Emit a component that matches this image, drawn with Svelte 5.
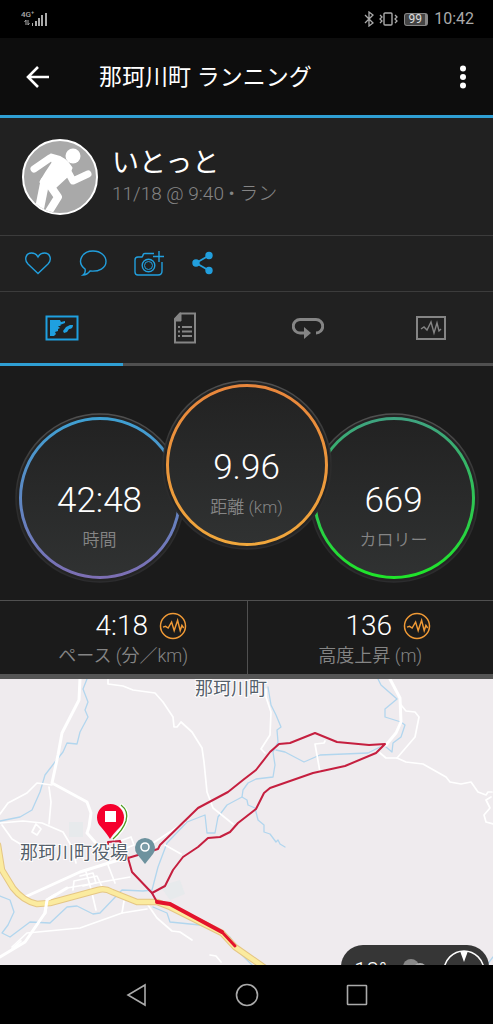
<script lang="ts">
  let activeTab = 'map';
  let liked = false;

  const tabs = [
    { id: 'map', label: '地図' },
    { id: 'details', label: '詳細' },
    { id: 'laps', label: 'ラップ' },
    { id: 'charts', label: 'グラフ' }
  ];

  const gauges = [
    { id: 'time', value: '42:48', label: '時間', from: '#3fa0d2', to: '#7d6fb4' },
    { id: 'distance', value: '9.96', label: '距離 (km)', from: '#e8863c', to: '#f0a73c' },
    { id: 'calories', value: '669', label: 'カロリー', from: '#3fa380', to: '#1fe52a' }
  ];

  const stats = [
    { value: '4:18', label: 'ペース (分／km)' },
    { value: '136', label: '高度上昇 (m)' }
  ];

  const rivers = [
    '87,0 83,10 88,23 85,31 88,38 80,53 77,65 67,64 63,73 55,83 45,96 40,113 32,131 20,138 0,142',
    '268,8 271,26 276,36 281,48 277,51 278,63 273,73 275,86 273,98 256,100 248,104 243,111 242,118 227,126 218,138 215,154 207,154 205,136 187,143 167,164 158,188 152,211 143,212 122,211 100,234 93,235 77,227 67,228 50,244 30,243 10,258 2,254 8,246 14,233 10,221 0,217',
    '276,71 285,73 304,83 320,76 368,74 380,68',
    '378,0 381,6 397,20 385,30 385,38 401,43 405,46 401,58 393,64 392,73 386,68',
    '242,118 247,121 248,126 255,129 258,141 264,146 264,153 270,155 276,163 278,161 280,165 285,168',
    '153,228 167,234 170,243 200,246 230,258 240,274 252,286',
    '487,286 493,278'
  ];

  const mainRoads = [
    '80,0 79,21 62,54 58,76 52,104 87,123 91,134 89,148 87,154 95,163',
    '390,0 400,19 401,43 396,54 386,66',
    '25,218 80,193 128,178',
    '0,278 25,263 45,234 47,221 67,209'
  ];

  const roads = [
    '0,135 8,124 27,114 37,104 52,106',
    '49,108 51,123 49,145',
    '0,144 23,142 42,144 63,153 72,168 76,184',
    '2,146 12,160 22,166',
    '32,153 36,145 41,150 37,156 32,153',
    '108,0 108,5 123,7 133,11 155,14 163,23 173,38 174,48 177,48 181,43 192,53 202,69 204,83 207,113 213,129 233,145',
    '266,10 266,18 271,33 270,56 261,70 265,74',
    '325,62 324,64 315,65 320,93',
    '401,26 406,32 415,33 419,38 415,58 397,79',
    '380,74 386,79 397,79 406,83 423,85 446,98 450,103 461,105 471,103 478,113 486,116 488,113 492,113',
    '491,118 486,121 490,129 484,136 486,143 493,145',
    '67,209 130,198',
    '73,211 74,202 97,197 104,212',
    '86,193 91,210 96,231',
    '108,186 115,204',
    '80,197 93,194 96,204 83,207',
    '120,162 131,158 134,166 124,170',
    '12,268 27,254 80,249 122,234 147,230',
    '122,234 124,222',
    '148,226 157,239 172,252 180,253 192,261',
    '150,166 185,143',
    '165,166 181,175',
    '210,276 216,277 221,283',
    '12,270 21,262'
  ];

  const highway =
    'M-2 166L2 191L13 209Q23 222 37 225L50 224L98 211Q105 209 112 213L137 223H157L170 228L222 254L235 268L265 289';
  const pulse = '0,6 3,5 6,7 10,0 13,10 17,-2 20,10 22,4 24,7';
</script>

<div class="screen">
  <div class="status-bar">
    <svg width="27" height="16" viewBox="0 0 27 16">
      <text class="network" x="0" y="6">4G⁺</text>
      <path d="M5 14V9l-1.500 2M7 9v5l1.500-2" fill="none" stroke="currentColor" />
      <path d="M11 12h1v3h-1zM14 10h2v5h-2zM17 7h2v8h-2zM20 4h2v11h-2zM24 2h2v13h-2z" fill="currentColor" />
    </svg>
    <div class="status-right">
      <svg width="34" height="16" viewBox="0 0 34 16" fill="none" stroke="currentColor">
        <path d="M1 4l8 8-4 3V1l4 3-8 8" stroke-width="1.3" />
        <rect x="20" y="2" width="8" height="12" rx="1" stroke-width="1.4" />
        <path d="M16 4l2 2-2 2 2 2-2 2M31 4l2 2-2 2 2 2-2 2" stroke-width="1.3" />
      </svg>
      <span class="battery">99</span>
      <span class="clock">10:42</span>
    </div>
  </div>

  <header class="app-bar">
    <button aria-label="戻る">
      <svg width="24" height="24" viewBox="0 0 24 24" fill="none" stroke="currentColor" stroke-width="2.6">
        <path d="M23 12H3M12 2L2 12l10 10" />
      </svg>
    </button>
    <h1>那珂川町 ランニング</h1>
    <button aria-label="メニュー">
      <svg width="8" height="24" viewBox="0 0 8 24" fill="currentColor">
        <circle cx="4" cy="3.5" r="3" />
        <circle cx="4" cy="12" r="3" />
        <circle cx="4" cy="20.5" r="3" />
      </svg>
    </button>
  </header>

  <section class="profile">
    <svg width="76" height="76" viewBox="0 0 76 76">
      <defs>
        <clipPath id="avatar-clip"><circle cx="38" cy="38" r="36" /></clipPath>
      </defs>
      <circle cx="38" cy="38" r="37" fill="#a9a9a9" stroke="#fff" stroke-width="2" />
      <g clip-path="url(#avatar-clip)" fill="none" stroke="#fff" stroke-linecap="round" stroke-linejoin="round">
        <circle cx="51" cy="17" r="7.5" fill="#fff" stroke="none" />
        <path d="M12 30L28 19" stroke-width="7" />
        <path d="M45 31L51 42L66 35" stroke-width="7" />
        <path d="M29 16Q44 19 49 29L46 36L33 48L19 43Q24 34 31 24Z" fill="#fff" stroke-width="3" />
        <path d="M23 42L17 72" stroke-width="9" />
        <path d="M27 45L36 58L26 74" stroke-width="8" />
      </g>
    </svg>
    <div>
      <h2>いとっと</h2>
      <p>11/18 @ 9:40 • ラン</p>
    </div>
  </section>

  <div class="actions">
    <button aria-label="いいね" aria-pressed={liked} on:click={() => (liked = !liked)}>
      <svg width="28" height="26" viewBox="0 0 28 26" fill={liked ? 'currentColor' : 'none'} stroke="currentColor" stroke-width="1.4">
        <path d="M14 23.500L4 14C0 10 1.500 3 7.500 3C11 3 13 5 14 7C15 5 17 3 20.500 3C26.500 3 28 10 24 14Z" />
      </svg>
    </button>
    <button aria-label="コメント">
      <svg width="28" height="26" viewBox="0 0 28 26" fill="none" stroke="currentColor" stroke-width="1.4">
        <path d="M4 25Q7 23 6 19C-3 12 3 1 14 1C22 1 27 6 27 11.500C27 18 20 22 11 21Q8 25 4 25Z" />
      </svg>
    </button>
    <button aria-label="写真を追加">
      <svg width="30" height="26" viewBox="0 0 30 26" fill="none" stroke="currentColor" stroke-width="1.4">
        <path d="M20 3.500H11Q9 3.500 9 5.500L8 7H4Q1 7 1 10V22Q1 25 4 25H24Q28 25 28 21V12M25 1V12M19 6.500H30" />
        <circle cx="14.500" cy="15.500" r="6.300" />
        <circle cx="14.500" cy="15.500" r="4" stroke-width="1" />
      </svg>
    </button>
    <button aria-label="共有">
      <svg width="24" height="24" viewBox="0 0 24 24" fill="currentColor" stroke="currentColor" stroke-width="1.4">
        <path d="M18 4.500L5 12L18 19.500" fill="none" stroke-width="1.8" />
        <circle cx="5" cy="12" r="3" />
        <circle cx="18" cy="4.500" r="3" />
        <circle cx="18" cy="19.500" r="3" />
      </svg>
    </button>
  </div>

  <nav class="tabs">
    {#each tabs as tab}
      <button class:active={activeTab === tab.id} aria-label={tab.label} on:click={() => (activeTab = tab.id)}>
        {#if tab.id === 'map'}
          <svg width="34" height="26" viewBox="0 0 34 26">
            <rect x="1.500" y="1.500" width="31" height="23" fill="none" stroke="currentColor" stroke-width="2" />
            <path d="M5 5H15L16 7L20 6V8L15 10L16 11H13L15 13L13 14V16L10 17L11 19L9 21H5ZM28 10Q28 14 24 14L22 17L19 18L18 16L21 12L25 10Z" fill="currentColor" />
          </svg>
        {:else if tab.id === 'details'}
          <svg width="24" height="32" viewBox="0 0 24 32" fill="none" stroke="currentColor">
            <path d="M7 1.500H22V30.500H2V7Z" stroke-width="2" />
            <path d="M8 1V9H2V7L7 1Z" fill="currentColor" />
            <path d="M5 15h2M9 15h10M5 19.500h2M9 19.500h10M5 24h2M9 24h10" stroke-width="1.9" />
          </svg>
        {:else if tab.id === 'laps'}
          <svg width="32" height="22" viewBox="0 0 32 22">
            <path d="M13 16H8A6.500 6.500 0 0 1 8 2.500H24A6.500 6.500 0 0 1 24 16" fill="none" stroke="currentColor" stroke-width="3" />
            <path d="M12 10L19 16L12 22Z" fill="currentColor" />
          </svg>
        {:else}
          <svg width="30" height="26" viewBox="0 0 30 26" fill="none" stroke="currentColor">
            <rect x="1" y="2" width="28" height="22" stroke-width="2" />
            <polyline points="5,14 8,12 11,15 15,7 18,18 21,8 23,16 25,14" stroke-width="1.4" />
          </svg>
        {/if}
      </button>
    {/each}
  </nav>

  <section class="gauges">
    {#each gauges as gauge}
      <div class="gauge {gauge.id}">
        <svg viewBox="0 0 170 170">
          <defs>
            <linearGradient id="ring-{gauge.id}" x2="0" y2="1">
              <stop offset="0" stop-color={gauge.from} />
              <stop offset="1" stop-color={gauge.to} />
            </linearGradient>
            <linearGradient id="edge-{gauge.id}" x2="0" y2="1">
              <stop offset="0" stop-color="#505050" />
              <stop offset="0.5" stop-color="#2c2c2c" />
              <stop offset="1" stop-color="#2c2c2e" />
            </linearGradient>
            <linearGradient id="face-{gauge.id}" x2="0" y2="1">
              <stop offset="0" stop-color="#222" />
              <stop offset="1" stop-color="#303232" />
            </linearGradient>
          </defs>
          <circle cx="85" cy="85" r="84" fill="#242424" stroke="url(#edge-{gauge.id})" stroke-width="1.5" />
          <circle cx="85" cy="85" r="79.500" fill="url(#face-{gauge.id})" stroke="url(#ring-{gauge.id})" stroke-width="3" />
        </svg>
        <div class="gauge-text">
          <strong>{gauge.value}</strong>
          <span>{gauge.label}</span>
        </div>
      </div>
    {/each}
  </section>

  <section class="stats">
    {#each stats as stat}
      <div class="stat">
        <div class="stat-value">
          {stat.value}
          <svg width="28" height="28" viewBox="0 0 28 28" fill="none" stroke="#f09a36">
            <circle cx="14" cy="14" r="12.500" stroke-width="1.5" />
            <polyline points={pulse} transform="translate(4 10) scale(0.86)" stroke-width="1.7" />
          </svg>
        </div>
        <span>{stat.label}</span>
      </div>
    {/each}
  </section>

  <main class="map">
    <svg viewBox="0 0 493 286" preserveAspectRatio="xMidYMin slice">
      <rect width="493" height="286" fill="#efebee" />
      <path d="M69 143h14v15H69zM160 207l20-6 5 14-15 6z" fill="#e7eaec" />
      <g fill="none" stroke-linejoin="round" stroke-linecap="round">
        {#each rivers as points}
          <polyline {points} stroke="#b2d6ee" stroke-width="1.3" />
        {/each}
        {#each roads as points}
          <polyline {points} stroke="#fff" stroke-width="1.7" />
        {/each}
        {#each mainRoads as points}
          <polyline {points} stroke="#fff" stroke-width="3" />
        {/each}
        <path d={highway} stroke="#e5c684" stroke-width="6.5" />
        <path d={highway} stroke="#fbeb9f" stroke-width="4.5" />
        <path d="M45 234L47 221L55 216" stroke="#fff" stroke-width="3" />
        <polyline points="108,165 108,163 120,162 122,168 128,179 132,193 152,214 157,223" stroke="#c51f3f" stroke-width="2" />
        <polyline points="128,179 158,170 160,166 198,129 228,113 243,101 256,91 270,73 279,65 290,64 315,54 337,63 369,66 385,65 376,74 345,87 313,94 270,109 264,114 256,130 238,144 230,153 220,158 208,159 198,168 183,178 173,191 165,207 152,214" stroke="#c51f3f" stroke-width="2" />
        <polyline points="157,223 170,225 222,253" stroke="#e3132c" stroke-width="4" />
        <polyline points="222,253 235,267" stroke="#e3132c" stroke-width="3" />
      </g>
      <g class="place">
        <text x="195" y="16">那珂川町</text>
        <text x="20" y="180">那珂川町役場</text>
      </g>
      <path d="M145 185L137 175A10 10 0 1 1 153 175Z" fill="#6d929e" />
      <circle cx="145" cy="168" r="4" fill="#7c9da8" stroke="#fff" stroke-width="1.6" />
      <path d="M120 126Q129 132 126 142Q123 151 113 160" fill="none" stroke="#fff" stroke-width="4" />
      <path d="M121 126Q129 132 126 142Q123 151 113 160" fill="none" stroke="#4f9a22" stroke-width="1.3" />
      <path d="M110 160Q107 155 101 148A13.500 13.500 0 1 1 120 148Q113 155 110 160Z" fill="#f5002d" />
      <rect x="105" y="132" width="11" height="11" fill="#fff" />
    </svg>
    <div class="weather">
      <span>18°</span>
      <svg width="28" height="28" viewBox="0 0 28 28">
        <circle cx="10" cy="14" r="8" fill="#888" />
        <circle cx="19" cy="17" r="7" fill="#aaa" />
      </svg>
      <svg width="42" height="42" viewBox="0 0 42 42">
        <circle cx="21" cy="25" r="20" fill="none" stroke="#fff" stroke-width="1.5" />
        <path d="M17 5h8l-4 11z" fill="#fff" />
      </svg>
    </div>
  </main>

  <footer class="nav-bar">
    <button aria-label="前の画面">
      <svg width="24" height="24" viewBox="0 0 24 24"><path d="M20 2V22L3 12Z" /></svg>
    </button>
    <button aria-label="ホーム">
      <svg width="24" height="24" viewBox="0 0 24 24"><circle cx="12" cy="12" r="10.500" /></svg>
    </button>
    <button aria-label="アプリ履歴">
      <svg width="24" height="24" viewBox="0 0 24 24"><rect x="2.500" y="2.500" width="19" height="19" rx="0.500" /></svg>
    </button>
  </footer>
</div>

<style>
  :global(body) {
    margin: 0;
    background: #000;
  }

  .screen {
    display: flex;
    flex-direction: column;
    min-height: 100vh;
    background: #1b1b1b;
    color: #fff;
    font-family: Roboto, 'Noto Sans CJK JP', sans-serif;
    font-weight: 300;
  }

  h1,
  h2,
  p {
    margin: 0;
  }

  h1,
  h2 {
    font-weight: 400;
  }

  button {
    display: flex;
    align-items: center;
    justify-content: center;
    padding: 0;
    border: none;
    background: none;
    color: inherit;
    cursor: pointer;
  }

  svg {
    display: block;
  }

  .status-bar {
    display: flex;
    align-items: center;
    justify-content: space-between;
    height: 38px;
    padding: 0 19px 0 21px;
    background: #000;
    color: #aaa;
  }

  .network {
    fill: currentColor;
    font-size: 8px;
    font-weight: 500;
  }

  .status-right {
    display: flex;
    align-items: center;
    gap: 6px;
    font-weight: 400;
  }

  .battery {
    width: 20px;
    border: 1px solid #888;
    border-right-width: 3px;
    border-radius: 3px;
    background: #444;
    color: #ddd;
    font-size: 12px;
    line-height: 11px;
    text-align: center;
  }

  .clock {
    font-size: 16px;
    line-height: 20px;
  }

  .app-bar {
    display: flex;
    align-items: center;
    height: 77px;
    padding: 0 26px;
    border-bottom: 3px solid #2f9fd4;
    background: #0d0d0d;
  }

  .app-bar h1 {
    flex: 1;
    padding: 2px 0 0 49px;
    font-size: 23px;
    line-height: 32px;
  }

  .profile {
    display: flex;
    align-items: center;
    gap: 14px;
    height: 117px;
    padding-left: 22px;
    border-bottom: 1px solid #3c3c3c;
    background: #212121;
  }

  .profile h2 {
    font-size: 27px;
    line-height: 34px;
  }

  .profile p {
    color: #858585;
    font-size: 19px;
    line-height: 28px;
  }

  .actions {
    display: flex;
    align-items: center;
    gap: 27px;
    height: 53px;
    padding: 0 0 2px 24px;
    border-bottom: 1px solid #3c3c3c;
    background: #212121;
    color: #229fdd;
  }

  .tabs {
    display: grid;
    grid-template-columns: repeat(4, 1fr);
    background: #212121;
    color: #858585;
  }

  .tabs button {
    height: 74px;
    border-bottom: 3px solid #505050;
  }

  .tabs .active {
    border-color: #2f9fd4;
    color: #1fa0e0;
  }

  .gauges {
    display: flex;
    align-items: flex-end;
    justify-content: center;
    height: 203px;
    padding: 14px 0 17px;
  }

  .gauge {
    display: grid;
    width: 170px;
    height: 170px;
  }

  .gauge > * {
    grid-area: 1 / 1;
  }

  .gauge.distance {
    z-index: 1;
    align-self: flex-start;
    margin: 0 -23px;
  }

  .gauge-text {
    display: flex;
    flex-direction: column;
    align-items: center;
    gap: 2px;
    padding-top: 65px;
  }

  .gauge-text strong {
    font-size: 35px;
    font-weight: 300;
    line-height: 46px;
  }

  .gauge-text span,
  .stat span {
    color: #858585;
    font-size: 17px;
    font-weight: 350;
    line-height: 28px;
  }

  .stats {
    display: grid;
    grid-template-columns: 1fr 1fr;
    border-top: 1px solid #505050;
    border-bottom: 5px solid #555;
  }

  .stat {
    display: flex;
    flex-direction: column;
    align-items: center;
    height: 73px;
  }

  .stat span {
    font-size: 18px;
  }

  .stat + .stat {
    border-left: 1px solid #505050;
  }

  .stat-value {
    display: flex;
    align-items: center;
    gap: 11px;
    padding: 11px 0 2px 36px;
    font-size: 28px;
    line-height: 28px;
  }

  .map {
    position: relative;
    flex: 1;
    min-height: 286px;
    overflow: hidden;
    background: #efebee;
  }

  .map > svg {
    position: absolute;
    width: 100%;
    height: 100%;
  }

  .place {
    fill: #56616b;
    stroke: #fff;
    stroke-width: 2px;
    paint-order: stroke;
    font-size: 18px;
    font-weight: 400;
  }

  .weather {
    position: absolute;
    right: 4px;
    bottom: -24px;
    display: flex;
    align-items: center;
    justify-content: flex-end;
    gap: 14px;
    width: 144px;
    height: 44px;
    padding-right: 4px;
    border-radius: 22px;
    background: #363636;
    font-size: 22px;
    line-height: 24px;
  }

  .weather span {
    padding-top: 8px;
  }

  .nav-bar {
    display: flex;
    align-items: center;
    justify-content: center;
    gap: 86px;
    height: 59px;
    background: #000;
  }

  .nav-bar svg {
    fill: none;
    stroke: #aaa;
    stroke-width: 1.6;
  }
</style>
